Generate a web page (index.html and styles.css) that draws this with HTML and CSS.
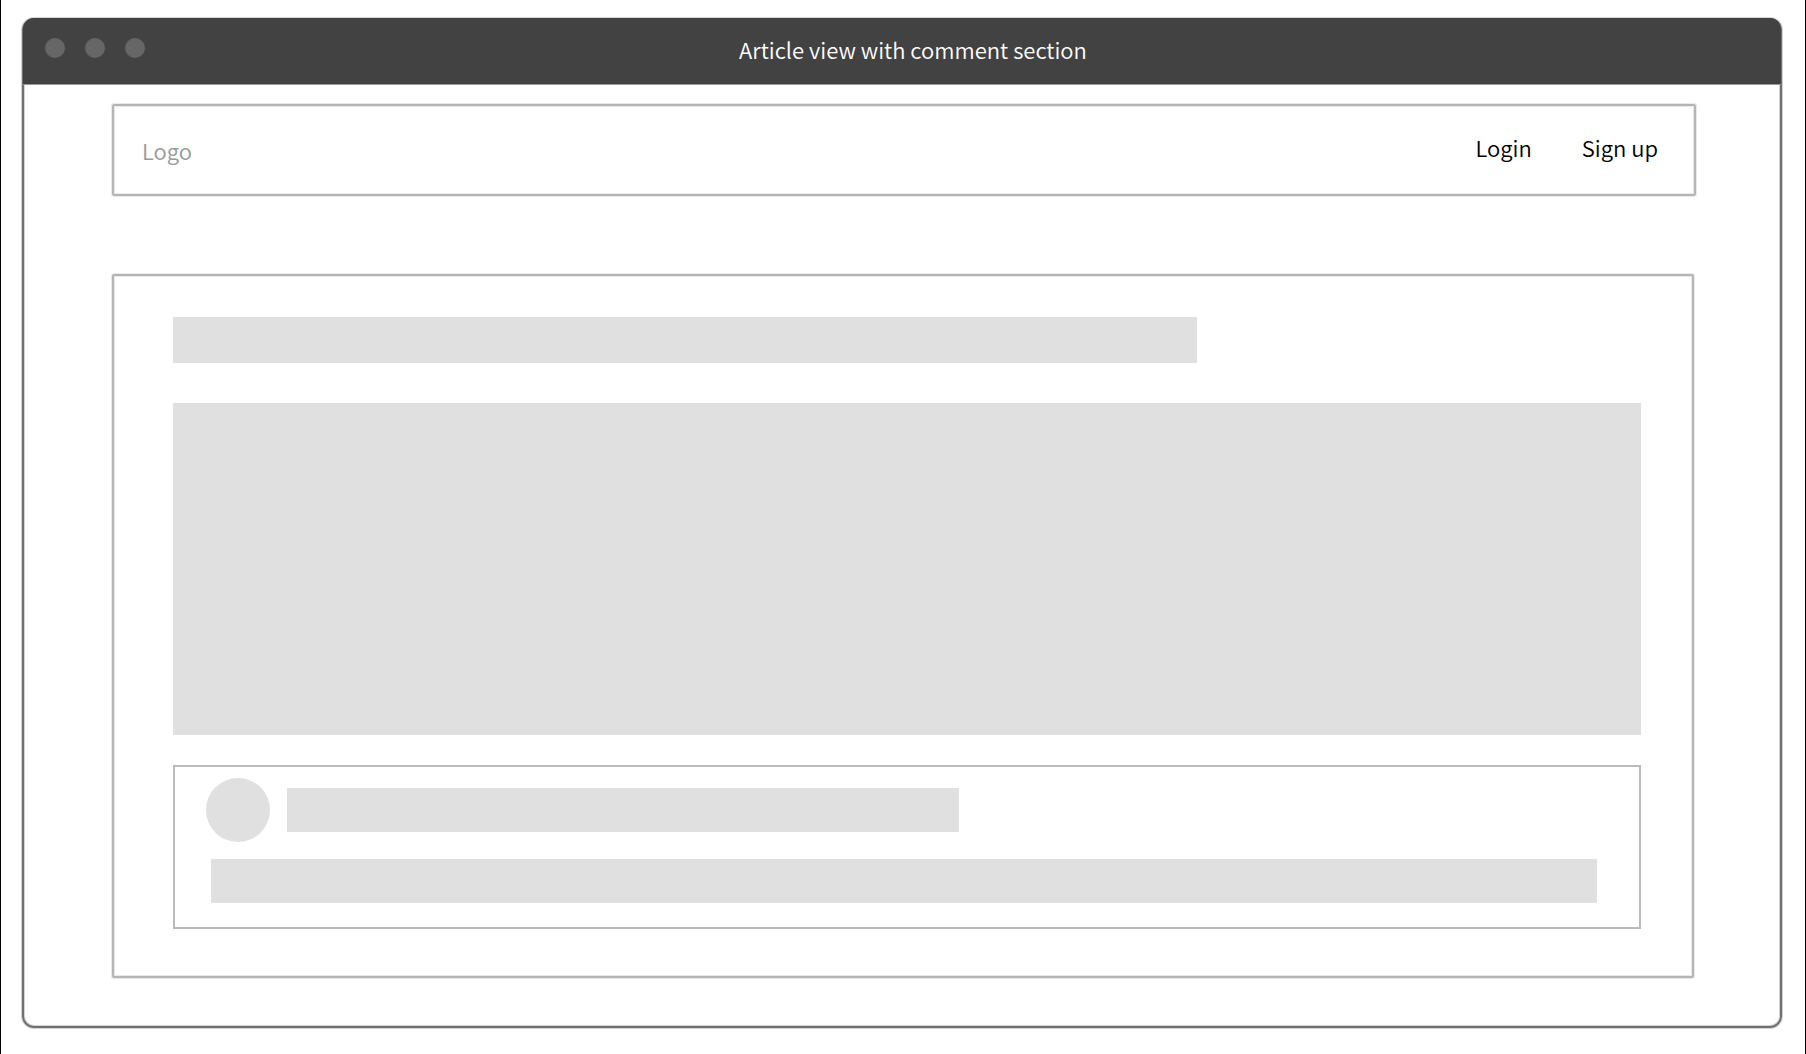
FILE: index.html
```html
<!DOCTYPE html>
<html lang="en">
<head>
  <meta charset="utf-8">
  <title>Article view with comment section</title>
  <link rel="stylesheet" href="styles.css">
</head>
<body>
  <div class="window">
    <div class="titlebar">
      <div class="controls">
        <span class="dot"></span>
        <span class="dot"></span>
        <span class="dot"></span>
      </div>
      <h1 class="window-title">Article view with comment section</h1>
    </div>
    <div class="content">
      <header class="site-header frame">
        <span class="logo">Logo</span>
        <nav class="site-nav">
          <a href="#login">Login</a>
          <a href="#signup">Sign up</a>
        </nav>
      </header>
      <main class="article frame">
        <div class="block headline"></div>
        <div class="block body-copy"></div>
        <section class="comment">
          <div class="comment-head">
            <div class="avatar"></div>
            <div class="block author"></div>
          </div>
          <div class="block comment-text"></div>
        </section>
      </main>
    </div>
  </div>
</body>
</html>
```

FILE: styles.css
```css
* {
  box-sizing: border-box;
}

body {
  display: flex;
  min-height: 100vh;
  margin: 0;
  padding: 18px 23px 26px 21px;
  border: solid #000;
  border-width: 0 1px;
  background: #fff;
  color: #000;
  font: 350 22px/36px "Noto Sans CJK SC", "Noto Sans", sans-serif;
}

.window {
  flex: 1;
  border: 2px solid #707070;
  border-radius: 12px;
  box-shadow: 0 0 0 1px #d4d4d4, inset 0 0 0 1px #d4d4d4;
}

.titlebar {
  display: grid;
  grid-template-columns: 1fr auto 1fr;
  align-items: center;
  height: 67px;
  margin: -2px -1px 0;
  padding: 0 0 5px 22px;
  border-bottom: 1px solid #999;
  border-radius: 11px 11px 0 0;
  background: #424242;
  color: #fff;
}

.controls {
  display: flex;
  gap: 20px;
  padding-bottom: 1px;
}

.dot {
  width: 20px;
  height: 20px;
  border-radius: 50%;
  background: #666;
}

.window-title {
  margin: 0;
  font-size: 22px;
  font-weight: 350;
}

.content {
  padding: 19px 84px 48px 88px;
}

.frame {
  border: 2px solid #b5b5b5;
  border-radius: 2px;
  box-shadow: 0 0 0 1px #e9e9e9, inset 0 0 0 1px #e9e9e9;
}

.site-header {
  display: flex;
  align-items: center;
  justify-content: space-between;
  height: 92px;
  padding: 0 36px 0 28px;
}

.logo {
  color: #999;
}

.site-nav {
  display: flex;
  gap: 50px;
  padding-bottom: 6px;
}

.site-nav a {
  color: inherit;
  text-decoration: none;
}

.article {
  margin: 78px 2px 0 0;
  padding: 41px 51px 47px 59px;
}

.block {
  height: 44px;
  background: #e0e0e0;
}

.headline {
  width: 69.75%;
  height: 46px;
}

.body-copy {
  height: 332px;
  margin: 40px 0 30px;
}

.comment {
  padding: 11px 42px 24px 31px;
  border: 2px solid #bbb;
}

.comment-head {
  display: flex;
  align-items: center;
  gap: 17px;
}

.avatar {
  width: 64px;
  height: 64px;
  border-radius: 50%;
  background: #e0e0e0;
}

.author {
  width: 48.3%;
}

.comment-text {
  margin: 17px 0 0 5px;
}
```
